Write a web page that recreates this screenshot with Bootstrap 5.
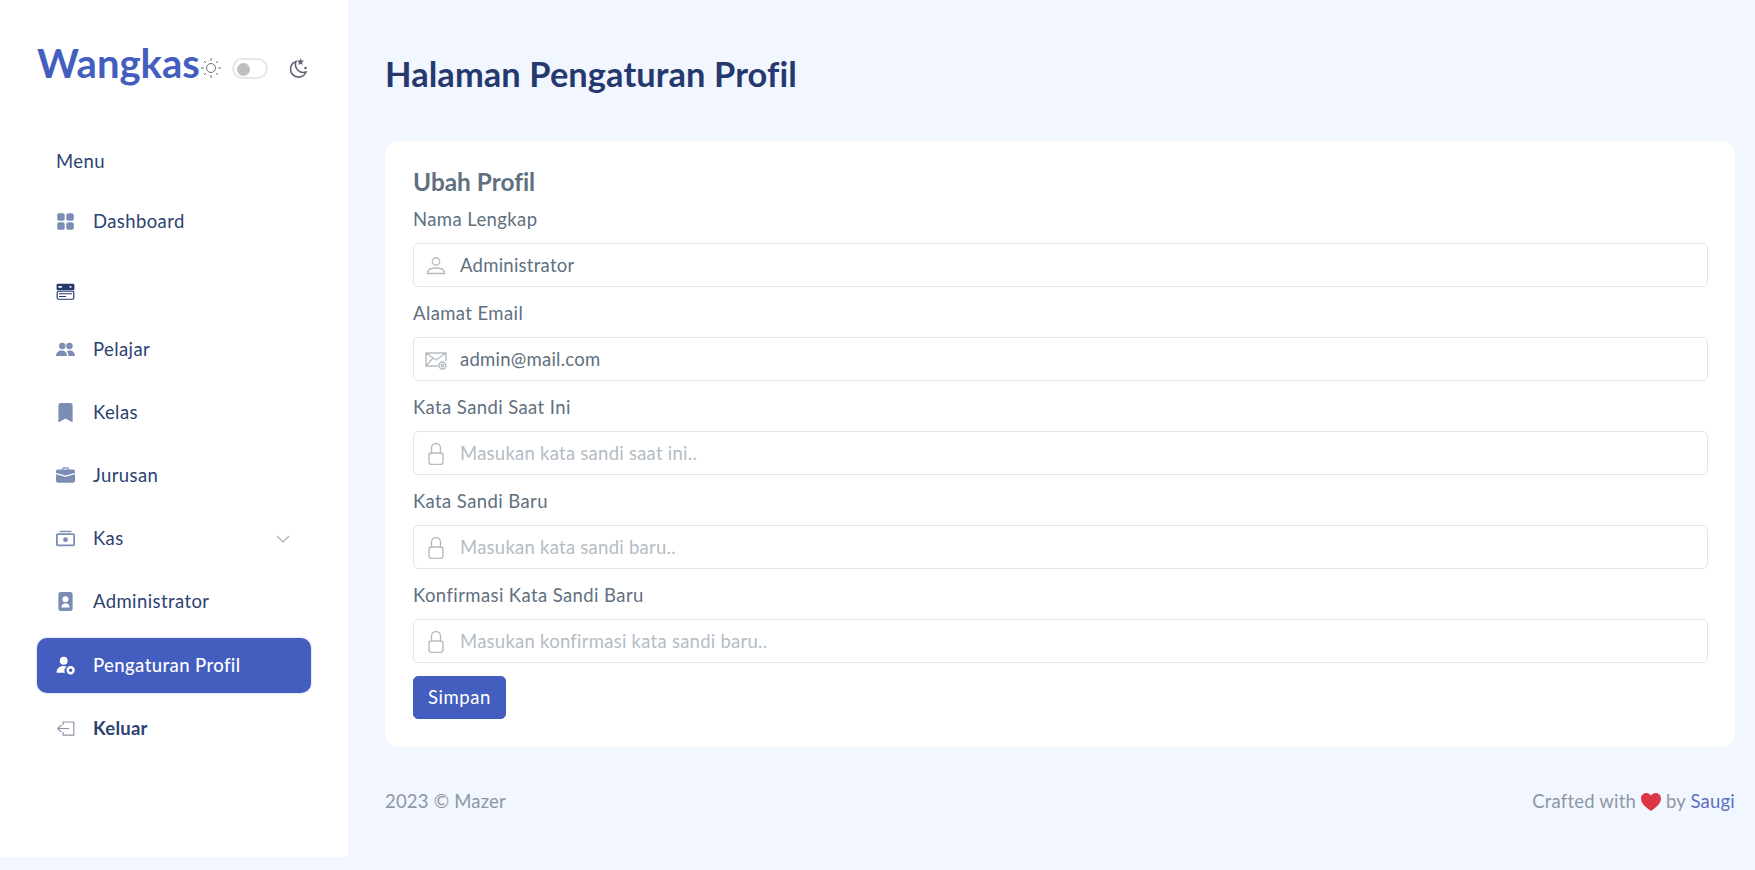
<!DOCTYPE html>
<html lang="en">
<head>
  <meta charset="UTF-8" />
  <meta name="viewport" content="width=device-width, initial-scale=1.0"/>
  <title>Halaman Pengaturan Profil</title>
  <link href="https://cdn.jsdelivr.net/npm/bootstrap@5.3.2/dist/css/bootstrap.min.css" rel="stylesheet" />
  <style>
    body {
      background-color: #f2f7ff;
      font-family: "Lato", "Open Sans", sans-serif;
      font-size: 18.5px;
      font-variant-ligatures: none;
      letter-spacing: .4px;
      color: #607080;
      height: 870px;
      overflow: hidden;
    }
    .side-panel {
      width: 348px;
      height: 857px;
      background: #fff;
      flex-shrink: 0;
      padding: 39px 37px 0;
    }
    .logo-text {
      font-size: 40px;
      font-weight: 700;
      letter-spacing: 0;
      color: #435ebe;
      line-height: 48px;
      width: 160px;
    }
    .theme-box { margin-left: 3px; padding-top: 18px; color: #5f6670; }
    .theme-switch {
      width: 36px;
      height: 21px;
      border: 2px solid #e4e6ee;
      border-radius: 11px;
      margin: 0 20px 0 10px;
      padding: 3px 0 0 3px;
    }
    .theme-knob { width: 13px; height: 13px; border-radius: 50%; background: #bfbfbf; }
    .menu-title { margin: 62px 0 0 19px; line-height: 24px; color: #2d4172; }
    .menu-link {
      display: flex;
      align-items: center;
      gap: 18px;
      height: 55px;
      margin-top: 8px;
      padding: 0 19px;
      border-radius: 10px;
      color: #2d4172;
      text-decoration: none;
    }
    .menu-link svg { width: 19px; height: 19px; fill: #7c8db5; flex-shrink: 0; }
    .menu-link.active-link { background: #435ebe; color: #fff; font-weight: 500; box-shadow: 0 0 2px #9fb0e6; margin-top: 9px; }
    .menu-link.active-link svg { fill: #fff; }
    .menu-link .chev { margin-left: auto; margin-right: 2px; width: 14px; height: 14px; fill: none; stroke: #a4acb8; stroke-width: 1.2; }
    .first-link { margin-top: 21px; }
    .stack-link { margin-top: 15px; margin-bottom: -5px; }
    .exit-link { font-weight: 700; letter-spacing: .25px; }
    .main-area { padding: 0 20px 0 37px; }
    .page-title { font-size: 34.4px; font-weight: 700; letter-spacing: .1px; color: #25396f; margin: 54px 0 47px; line-height: 40px; }
    .form-panel { background: #fff; border-radius: 14px; padding: 27px 27px 28px 28px; }
    .form-head { font-size: 24.4px; font-weight: 700; letter-spacing: 0; color: #607080; margin-bottom: 11px; line-height: 28px; }
    .field-label { line-height: 24px; margin-bottom: 12px; display: block; }
    .field-wrap { position: relative; margin-bottom: 14px; }
    .field-wrap:last-of-type { margin-bottom: 13px; }
    .field-input {
      height: 44px;
      padding-left: 46px;
      border-color: #dfe6ef;
      border-radius: 5px;
      color: #607080;
      font-size: 18.5px;
      letter-spacing: .25px;
    }
    .field-input::placeholder { color: #b4bcc5; }
    .field-icon {
      position: absolute;
      left: 11px;
      top: 10px;
      width: 24px;
      height: 24px;
      fill: none;
      stroke: #b5bcc4;
      stroke-width: 1.4;
    }
    .save-btn {
      background: #435ebe;
      border-color: #435ebe;
      font-size: 18.5px;
      letter-spacing: .6px;
      height: 43px;
      width: 93px;
      padding: 0;
      border-radius: 5px;
    }
    .foot-row { padding-top: 41px; color: #8d96a6; line-height: 26px; letter-spacing: .2px; }
    .foot-row a { color: #5a6fc0; text-decoration: none; }
    .heart-icon { width: 20px; height: 18px; fill: #dc3545; vertical-align: -3px; }
  </style>
</head>
<body>
  <div class="d-flex">
    <aside class="side-panel">
      <div class="d-flex align-items-start">
        <div class="logo-text">Wangkas</div>
        <div class="theme-box d-flex align-items-center">
          <svg width="22" height="22" viewBox="0 0 22 22" fill="none" stroke="#6b727c" stroke-width="1"><circle cx="11" cy="11" r="4.5"/><path d="M11 1v3M11 18v3M1 11h3M18 11h3M4 4l2 2M16 16l2 2M4 18l2-2M16 6l2-2"/></svg>
          <div class="theme-switch"><div class="theme-knob"></div></div>
          <svg width="20" height="22" viewBox="0 0 20 22"><path d="M8 4.500a8 8 0 1 0 10 10.500A8 8 0 0 1 8 4.500z" fill="none" stroke="#5f6670" stroke-width="1.6"/><path d="M12.500 1l1 2.600 2.600.2-2 1.700.7 2.600-2.300-1.400-2.300 1.400.7-2.600-2-1.700 2.600-.2z" fill="#5f6670"/><circle cx="17.500" cy="11" r="1.300" fill="#5f6670"/></svg>
        </div>
      </div>
      <div class="menu-title">Menu</div>
      <nav>
        <a class="menu-link first-link" href="#">
          <svg viewBox="0 0 16 16"><rect x="1" y="1" width="6.300" height="6.300" rx="1.600"/><rect x="8.700" y="1" width="6.300" height="6.300" rx="1.600"/><rect x="1" y="8.700" width="6.300" height="6.300" rx="1.600"/><rect x="8.700" y="8.700" width="6.300" height="6.300" rx="1.600"/></svg>
          Dashboard
        </a>
        <a class="menu-link stack-link" href="#">
          <svg viewBox="0 0 16 16"><rect x="0.500" y="1.500" width="15" height="5.500" rx="1.200" fill="#25396f"/><rect x="2" y="3.400" width="3" height="1.400" fill="#fff"/><rect x="11.500" y="3.400" width="1.500" height="1.400" fill="#fff"/><rect x="1" y="7.800" width="14" height="6.700" rx="1.200" fill="#fff" stroke="#25396f" stroke-width="1"/><path d="M2.500 9.900h11M2.500 12.200h6" stroke="#25396f" stroke-width="1"/></svg>
        </a>
        <a class="menu-link" href="#">
          <svg viewBox="0 0 16 16"><circle cx="5.300" cy="5" r="2.700"/><circle cx="11.300" cy="5" r="2.700"/><path d="M0 13.500c0-3 2.200-4.600 4.800-4.600 1.500 0 2.800.5 3.600 1.500.6.8.8 1.800.8 3.100zM10.400 13.500c0-1.800-.4-3.300-1.300-4.300.7-.3 1.400-.4 2.300-.4 2.700 0 4.600 1.600 4.600 4.700z"/></svg>
          Pelajar
        </a>
        <a class="menu-link" href="#">
          <svg viewBox="0 0 16 16"><path d="M2 2a2 2 0 0 1 2-2h8a2 2 0 0 1 2 2v13.500a.5.5 0 0 1-.74.44L8 13.100l-5.260 2.840A.5.5 0 0 1 2 15.500z"/></svg>
          Kelas
        </a>
        <a class="menu-link" href="#">
          <svg viewBox="0 0 16 16"><path d="M6.500 1A1.500 1.500 0 0 0 5 2.500V3H1.500A1.500 1.500 0 0 0 0 4.500v1.400l8 2.100 8-2.100V4.500A1.500 1.500 0 0 0 14.500 3H11v-.5A1.500 1.500 0 0 0 9.500 1zm0 1h3a.5.5 0 0 1 .5.5V3H6v-.5a.5.5 0 0 1 .5-.5z"/><path d="M0 12.500A1.500 1.500 0 0 0 1.500 14h13a1.500 1.500 0 0 0 1.500-1.500V6.900L8.300 9a1 1 0 0 1-.6 0L0 6.900z"/></svg>
          Jurusan
        </a>
        <a class="menu-link" href="#">
          <svg viewBox="0 0 16 16"><path d="M3 1.500h10v1.200H3z"/><path fill-rule="evenodd" d="M1.500 3.500h13A1.500 1.500 0 0 1 16 5v8a1.500 1.500 0 0 1-1.500 1.500h-13A1.500 1.500 0 0 1 0 13V5a1.500 1.500 0 0 1 1.500-1.500zm0 1.500v8h13V5z"/><circle cx="8" cy="9" r="2"/></svg>
          Kas
          <svg class="chev" viewBox="0 0 14 14"><path d="M1 4l6 6 6-6"/></svg>
        </a>
        <a class="menu-link" href="#">
          <svg viewBox="0 0 16 16"><path fill-rule="evenodd" d="M4 0h8a2 2 0 0 1 2 2v12a2 2 0 0 1-2 2H4a2 2 0 0 1-2-2V2a2 2 0 0 1 2-2zm4 3.500a2.500 2.500 0 1 0 0 5 2.500 2.500 0 0 0 0-5zM4.500 13h7c0-2-1.500-3.500-3.500-3.500S4.500 11 4.500 13z"/></svg>
          Administrator
        </a>
        <a class="menu-link active-link" href="#">
          <svg viewBox="0 0 16 16"><circle cx="6.500" cy="4" r="3.300"/><path d="M0.500 14c0-3.300 2.500-5.500 6-5.500 1 0 1.800.2 2.500.5a4 4 0 0 0-1.500 5z"/><circle cx="12.300" cy="12" r="2.500" fill="none" stroke="#fff" stroke-width="2"/></svg>
          Pengaturan Profil
        </a>
        <a class="menu-link exit-link" href="#">
          <svg viewBox="0 0 16 16" style="fill:none;stroke:#8d94a8;stroke-width:1"><path d="M6 5V2.500h9v11H6V11"/><path d="M11 8H1.500M4.500 5l-3 3 3 3"/></svg>
          Keluar
        </a>
      </nav>
    </aside>

    <main class="main-area flex-grow-1">
      <h3 class="page-title">Halaman Pengaturan Profil</h3>
      <div class="form-panel">
        <h4 class="form-head">Ubah Profil</h4>
        <form>
          <label class="field-label">Nama Lengkap</label>
          <div class="field-wrap">
            <input type="text" class="form-control field-input" value="Administrator" />
            <svg class="field-icon" viewBox="0 0 24 24"><circle cx="12" cy="8.500" r="3.700"/><path d="M3.500 20.500c0-3.600 2.800-5.500 8.500-5.500s8.500 1.900 8.500 5.500z"/></svg>
          </div>
          <label class="field-label">Alamat Email</label>
          <div class="field-wrap">
            <input type="email" class="form-control field-input" value="admin@mail.com" />
            <svg class="field-icon" viewBox="0 0 24 24"><path d="M14 19H2V6h20v8M2 6l10 7 10-7M2 19l7-8"/><circle cx="18.500" cy="18.500" r="3.500"/><circle cx="18.500" cy="18.500" r="1.300"/></svg>
          </div>
          <label class="field-label">Kata Sandi Saat Ini</label>
          <div class="field-wrap">
            <input type="password" class="form-control field-input" placeholder="Masukan kata sandi saat ini.." />
            <svg class="field-icon" viewBox="0 0 24 24"><path d="M7.500 12V7a4.500 4.500 0 0 1 9 0v5"/><rect x="5" y="12" width="14" height="11.500" rx="2.500"/></svg>
          </div>
          <label class="field-label">Kata Sandi Baru</label>
          <div class="field-wrap">
            <input type="password" class="form-control field-input" placeholder="Masukan kata sandi baru.." />
            <svg class="field-icon" viewBox="0 0 24 24"><path d="M7.500 12V7a4.500 4.500 0 0 1 9 0v5"/><rect x="5" y="12" width="14" height="11.500" rx="2.500"/></svg>
          </div>
          <label class="field-label">Konfirmasi Kata Sandi Baru</label>
          <div class="field-wrap">
            <input type="password" class="form-control field-input" placeholder="Masukan konfirmasi kata sandi baru.." />
            <svg class="field-icon" viewBox="0 0 24 24"><path d="M7.500 12V7a4.500 4.500 0 0 1 9 0v5"/><rect x="5" y="12" width="14" height="11.500" rx="2.500"/></svg>
          </div>
          <button type="button" class="btn btn-primary save-btn">Simpan</button>
        </form>
      </div>
      <footer class="foot-row d-flex justify-content-between">
        <div>2023 © Mazer</div>
        <div>Crafted with <svg class="heart-icon" viewBox="0 0 20 18"><path d="M10 18C3 13 0 9.500 0 5.500 0 2.300 2.400 0 5.300 0 7.200 0 9 1 10 2.700 11 1 12.800 0 14.700 0 17.600 0 20 2.300 20 5.500c0 4-3 7.500-10 12.500z"/></svg> by <a href="#">Saugi</a></div>
      </footer>
    </main>
  </div>
  <script src="https://cdn.jsdelivr.net/npm/bootstrap@5.3.2/dist/js/bootstrap.bundle.min.js"></script>
</body>
</html>
